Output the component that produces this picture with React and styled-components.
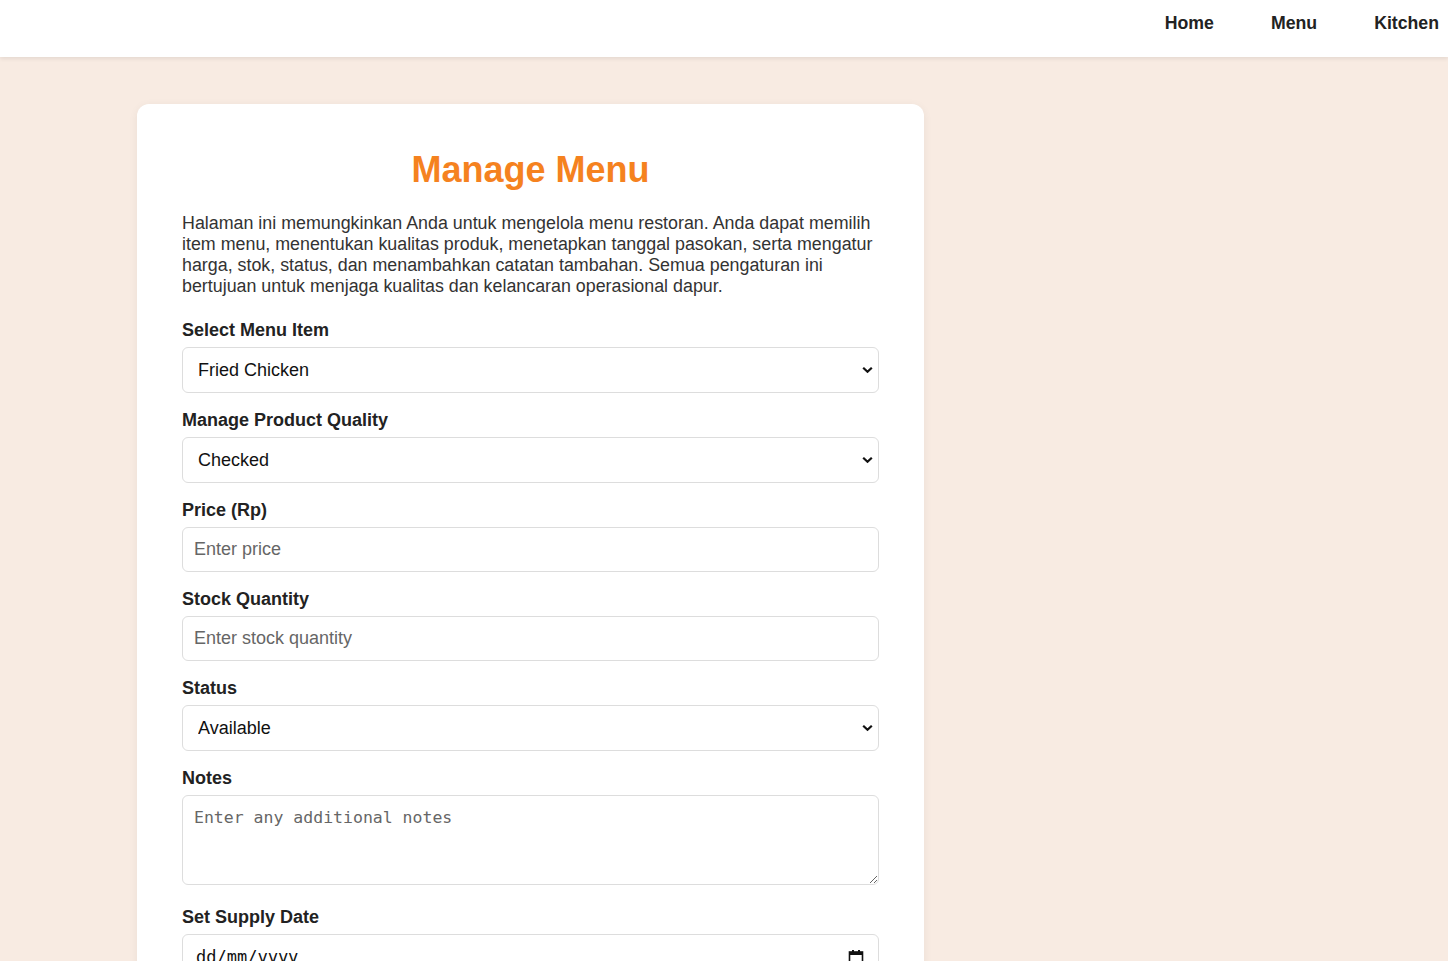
import React from "react"
import styled, { createGlobalStyle } from "styled-components"

const GlobalStyle = createGlobalStyle`
  html, body {
    margin: 0;
    padding: 0;
    background: #f8ebe2;
    font-family: "Liberation Sans", Arial, sans-serif;
  }
`

const Header = styled.header`
  height: 57px;
  background: #ffffff;
  box-shadow: 0 2px 4px rgba(0, 0, 0, 0.08);
  display: flex;
  justify-content: flex-end;
  align-items: flex-start;
  padding: 13px 9px 0 0;
  box-sizing: border-box;
  position: relative;
  z-index: 1;
`

const Nav = styled.nav`
  display: flex;
  gap: 57px;
`

const NavLink = styled.a`
  font-size: 17.7px;
  line-height: 20px;
  font-weight: bold;
  color: #222;
  text-decoration: none;
`

const Main = styled.main`
  padding: 47px 0 0 137px;
`

const Card = styled.section`
  width: 787px;
  box-sizing: border-box;
  background: #fff;
  border-radius: 12px;
  box-shadow: 0 2px 10px rgba(0, 0, 0, 0.06);
  padding: 42px 45px 40px;
`

const Title = styled.h1`
  margin: 3px 0 23px;
  text-align: center;
  font-size: 36px;
  line-height: 41px;
  font-weight: bold;
  color: #f5821f;
`

const Intro = styled.p`
  margin: 0 0 23px;
  font-size: 17.85px;
  line-height: 21px;
  color: #333;
`

const Field = styled.div`
  display: flex;
  flex-direction: column;
  margin-bottom: ${(p) => (p.$spaced ? "22px" : "17px")};
  position: relative;
`

const Label = styled.label`
  font-size: 18px;
  line-height: 20px;
  font-weight: bold;
  color: #222;
  margin-bottom: 7px;
`

const controlBase = `
  width: 100%;
  box-sizing: border-box;
  border: 1px solid #ddd;
  border-radius: 6px;
  background: #fff;
  padding: 0 11px;
  font-size: 18px;
  color: #111;
  outline: none;
`

const SelectWrap = styled.div`
  position: relative;
`

const Select = styled.select`
  ${controlBase}
  height: 46px;
  padding-left: 15px;
  appearance: none;
  font-family: "Liberation Sans", Arial, sans-serif;
`

const Chevron = styled.svg`
  position: absolute;
  right: 6px;
  top: 50%;
  width: 11px;
  height: 7px;
  transform: translateY(-50%);
  pointer-events: none;
`

const Input = styled.input`
  ${controlBase}
  height: ${(p) => (p.$mono ? "46px" : "45px")};
  font-family: ${(p) => (p.$mono ? '"DejaVu Sans Mono", monospace' : '"Liberation Sans", Arial, sans-serif')};
  font-size: ${(p) => (p.$mono ? "17px" : "18px")};
  padding-left: ${(p) => (p.$mono ? "13px" : "11px")};
  &::placeholder {
    color: ${(p) => (p.$mono ? "#111" : "#666")};
    opacity: 1;
  }
`

const TextArea = styled.textarea`
  ${controlBase}
  display: block;
  height: 90px;
  padding: 12px 11px;
  font-family: "DejaVu Sans Mono", monospace;
  font-size: 16.5px;
  line-height: 20px;
  resize: vertical;
  &::placeholder {
    color: #666;
  }
`

const CalendarIcon = styled.svg`
  position: absolute;
  right: 15px;
  bottom: 15px;
  width: 16px;
  height: 16px;
  pointer-events: none;
`

const Dropdown = ({ value, options }) => (
  <SelectWrap>
    <Select defaultValue={value}>
      {options.map((o) => (
        <option key={o} value={o}>
          {o}
        </option>
      ))}
    </Select>
    <Chevron viewBox="0 0 11 7">
      <path d="M1.2 1.2 L5.5 5.3 L9.8 1.2" fill="none" stroke="#111" strokeWidth="2.2" />
    </Chevron>
  </SelectWrap>
)

const App = () => {
  return (
    <>
      <GlobalStyle />
      <Header>
        <Nav>
          <NavLink href="#">Home</NavLink>
          <NavLink href="#">Menu</NavLink>
          <NavLink href="#">Kitchen</NavLink>
        </Nav>
      </Header>
      <Main>
        <Card>
          <Title>Manage Menu</Title>
          <Intro>
            Halaman ini memungkinkan Anda untuk mengelola menu restoran. Anda dapat memilih
            item menu, menentukan kualitas produk, menetapkan tanggal pasokan, serta mengatur
            harga, stok, status, dan menambahkan catatan tambahan. Semua pengaturan ini
            bertujuan untuk menjaga kualitas dan kelancaran operasional dapur.
          </Intro>

          <Field>
            <Label>Select Menu Item</Label>
            <Dropdown value="Fried Chicken" options={["Fried Chicken", "Burger", "French Fries"]} />
          </Field>

          <Field>
            <Label>Manage Product Quality</Label>
            <Dropdown value="Checked" options={["Checked", "Unchecked"]} />
          </Field>

          <Field>
            <Label>Price (Rp)</Label>
            <Input type="number" placeholder="Enter price" />
          </Field>

          <Field>
            <Label>Stock Quantity</Label>
            <Input type="number" placeholder="Enter stock quantity" />
          </Field>

          <Field>
            <Label>Status</Label>
            <Dropdown value="Available" options={["Available", "Unavailable"]} />
          </Field>

          <Field $spaced>
            <Label>Notes</Label>
            <TextArea placeholder="Enter any additional notes" />
          </Field>

          <Field>
            <Label>Set Supply Date</Label>
            <Input type="text" $mono placeholder="dd/mm/yyyy" />
            <CalendarIcon viewBox="0 0 16 16">
              <rect x="1.5" y="3" width="13" height="11.5" fill="none" stroke="#111" strokeWidth="1.6" />
              <rect x="1.5" y="3" width="13" height="3" fill="#111" />
              <rect x="4" y="1" width="2" height="3" fill="#111" />
              <rect x="10" y="1" width="2" height="3" fill="#111" />
            </CalendarIcon>
          </Field>
        </Card>
      </Main>
    </>
  )
}

export default App
